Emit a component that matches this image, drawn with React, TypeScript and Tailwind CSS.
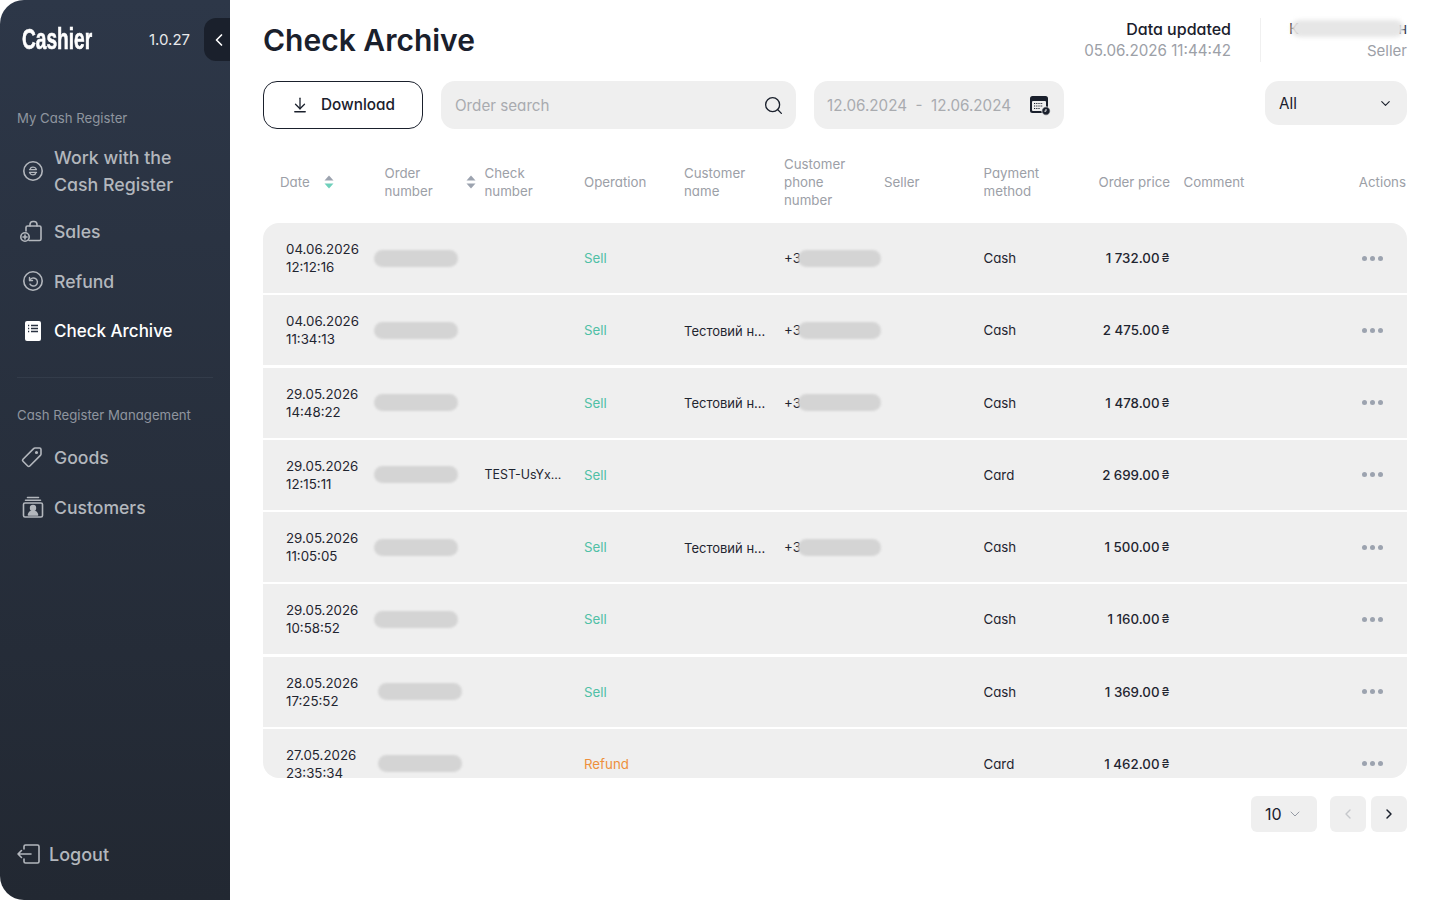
import React from "react";
import { ArrowDownToLine, ChevronDown, ChevronLeft, ChevronRight, Search } from "lucide-react";

const cols =
  "grid grid-cols-[121.5px_100px_99.5px_100px_100px_100px_99.5px_115px_71px_150px_87.5px] items-center";

type Row = {
  date: string;
  time: string;
  check?: string;
  op: string;
  customer?: string;
  phone?: boolean;
  pay: string;
  price: string;
  shifted?: boolean;
};

const rows: Row[] = [
  { date: "04.06.2026", time: "12:12:16", op: "Sell", phone: true, pay: "Cash", price: "1 732.00" },
  { date: "04.06.2026", time: "11:34:13", op: "Sell", customer: "Тестовий н...", phone: true, pay: "Cash", price: "2 475.00" },
  { date: "29.05.2026", time: "14:48:22", op: "Sell", customer: "Тестовий н...", phone: true, pay: "Cash", price: "1 478.00" },
  { date: "29.05.2026", time: "12:15:11", check: "TEST-UsYx...", op: "Sell", pay: "Card", price: "2 699.00" },
  { date: "29.05.2026", time: "11:05:05", op: "Sell", customer: "Тестовий н...", phone: true, pay: "Cash", price: "1 500.00" },
  { date: "29.05.2026", time: "10:58:52", op: "Sell", pay: "Cash", price: "1 160.00" },
  { date: "28.05.2026", time: "17:25:52", op: "Sell", pay: "Cash", price: "1 369.00", shifted: true },
  { date: "27.05.2026", time: "23:35:34", op: "Refund", pay: "Card", price: "1 462.00", shifted: true },
];

function SortIcon({ active }: { active?: boolean }) {
  return (
    <svg width="10" height="14" viewBox="0 0 10 14" className="shrink-0">
      <path d="M5 0.5 9.5 5.5H0.5z" fill="#9ca3af" />
      <path d="M5 13.5 0.5 8.5H9.5z" fill={active ? "#6fd0bb" : "#9ca3af"} />
    </svg>
  );
}

function NavItem({
  icon,
  active,
  className,
  children,
}: {
  icon: React.ReactNode;
  active?: boolean;
  className?: string;
  children: React.ReactNode;
}) {
  return (
    <div
      className={`flex h-[50px] items-center pl-[20px] font-medium leading-[27px] ${
        active ? "text-[17px] text-white" : "text-[17.6px] text-[#b3b7bd]"
      } ${className ?? ""}`}
    >
      <span className="flex w-[34px] shrink-0 items-center">{icon}</span>
      <span className={active ? "pt-px" : ""}>{children}</span>
    </div>
  );
}

const iconProps = {
  width: 26,
  height: 26,
  viewBox: "0 0 26 26",
  fill: "none",
  stroke: "currentColor",
  strokeWidth: 1.6,
  strokeLinecap: "round" as const,
  strokeLinejoin: "round" as const,
};

function Sidebar() {
  return (
    <aside className="flex h-[900px] w-[230px] shrink-0 flex-col rounded-l-[24px] bg-gradient-to-b from-[#2d3748] to-[#222832]">
      <div className="flex h-[79px] items-start">
        <div className="mt-[18px] flex h-[43px] w-full items-center">
          <span className="ml-[22px] w-[127px] origin-left scale-x-[0.66] font-['Liberation_Sans'] text-[29px] font-bold leading-none text-white [-webkit-text-stroke:0.6px_white]">
            Cashier
          </span>
          <span className="w-[55px] pt-[2px] text-[15px] text-[#e8e9eb]">1.0.27</span>
          <span className="flex h-[43px] w-[26px] items-center justify-center rounded-l-[12px] bg-[#1a202c] pl-[3px] text-white">
            <ChevronLeft size={20} strokeWidth={2} />
          </span>
        </div>
      </div>
      <div className="mt-[30px] pl-[17px] text-[13.2px] leading-[18px] text-[#8f959f]">My Cash Register</div>
      <div className="mt-[14px] flex h-[60px] items-center pl-[20px] text-[17.8px] font-medium leading-[27px] text-[#b3b7bd]">
        <span className="flex w-[34px] shrink-0 items-center">
          <svg {...iconProps}>
            <circle cx="13" cy="13" r="9.2" />
            <path d="M9.5 11.6h7M9.5 14.4h7M16 10.6c-.6-1-1.6-1.5-3-1.5-1.6 0-2.7.9-2.7 2.1M10 15.4c.6 1 1.6 1.5 3 1.5 1.6 0 2.7-.9 2.7-2.1" strokeWidth="1.3" />
          </svg>
        </span>
        <span>
          Work with the
          <br />
          Cash Register
        </span>
      </div>
      <NavItem
        className="mt-[5px]"
        icon={
          <svg {...iconProps} className="ml-[-2px]">
            <path d="M8 13V9.5a1.5 1.5 0 0 1 1.5-1.5h12a1.5 1.5 0 0 1 1.5 1.5V21a1.5 1.5 0 0 1-1.5 1.5H11" />
            <path d="M12 8V6.5a3 3 0 0 1 3-3h1a3 3 0 0 1 3 3V8" />
            <circle cx="7" cy="19" r="4.2" fill="#2a3342" />
            <path d="M7 17v4M5 19h4" />
          </svg>
        }
      >
        Sales
      </NavItem>
      <NavItem
        icon={
          <svg {...iconProps}>
            <circle cx="13" cy="13" r="9.2" />
            <path d="M9.5 9.5v3h3" strokeWidth="1.4" />
            <path d="M9.7 12.5a4 4 0 1 1 .3 3.6" strokeWidth="1.4" />
          </svg>
        }
      >
        Refund
      </NavItem>
      <NavItem
        active
        icon={
          <svg width="26" height="26" viewBox="0 0 26 26">
            <rect x="5" y="3" width="16" height="20" rx="2" fill="#fff" />
            <path d="M8 7.5h1.2M8 10.5h1.2M8 13.5h1.2M11 7.5h7M11 10.5h7M11 13.5h7" stroke="#2a3342" strokeWidth="1.4" />
          </svg>
        }
      >
        Check Archive
      </NavItem>
      <div className="mx-[17px] mt-[21px] h-px w-[196px] bg-[#333c4a]" />
      <div className="mt-[28px] pl-[17px] text-[13.2px] leading-[18px] text-[#8f959f]">Cash Register Management</div>
      <NavItem
        className="mt-[8px]"
        icon={
          <svg {...iconProps} className="ml-[-1px]">
            <path d="M4 15.2 14.6 4.6a2 2 0 0 1 1.4-.6h4.5A1.5 1.5 0 0 1 22 5.5V10a2 2 0 0 1-.6 1.4L10.8 22a1.5 1.5 0 0 1-2.1 0L4 17.3a1.5 1.5 0 0 1 0-2.1z" />
            <circle cx="17.5" cy="8.5" r="0.8" fill="currentColor" />
          </svg>
        }
      >
        Goods
      </NavItem>
      <NavItem
        icon={
          <svg {...iconProps}>
            <rect x="3.5" y="9" width="19" height="14" rx="1.5" />
            <path d="M5.5 6.3h15M7.5 3.5h11" />
            <circle cx="13" cy="14" r="2.4" fill="currentColor" />
            <path d="M8.5 21c.4-2.4 2-3.6 4.5-3.6s4.1 1.2 4.5 3.6z" fill="currentColor" />
          </svg>
        }
      >
        Customers
      </NavItem>
      <div className="mt-auto mb-[21px] flex h-[50px] items-center pl-[16px] text-[18px] font-medium text-[#b3b7bd]">
        <span className="flex w-[33px] shrink-0 items-center">
          <svg {...iconProps}>
            <path d="M8 8V5.5A1.5 1.5 0 0 1 9.5 4h12A1.5 1.5 0 0 1 23 5.5v15a1.5 1.5 0 0 1-1.5 1.5h-12A1.5 1.5 0 0 1 8 20.5V18" />
            <path d="M15 13H2M5.5 9.5 2 13l3.5 3.5" />
          </svg>
        </span>
        Logout
      </div>
    </aside>
  );
}

function Header() {
  return (
    <div className="flex h-[81px] items-start justify-between">
      <h1 className="mt-[20px] text-[30px] font-semibold leading-[40px] text-[#1a202c]">Check Archive</h1>
      <div className="mt-[18px] flex items-stretch">
        <div className="flex flex-col items-end pr-[29px] leading-[22px]">
          <span className="text-[16px] font-medium text-[#1a202c]">Data updated</span>
          <span className="text-[15.2px] text-[#9ca0a7]">05.06.2026 11:44:42</span>
        </div>
        <div className="h-[44px] w-px bg-[#f0f0f0]" />
        <div className="flex w-[146px] flex-col items-end text-[15px] leading-[22px]">
          <span className="relative flex w-[118px] justify-between text-[#1a202c]">
            <span>К</span>
            <span>н</span>
            <span className="absolute left-[2px] top-[2px] h-[17px] w-[113px] rounded-full bg-[#e6e6e6] blur-[2px]" />
          </span>
          <span className="text-[#9ca0a7]">Seller</span>
        </div>
      </div>
    </div>
  );
}

function Toolbar() {
  return (
    <div className="flex h-[48px] items-start text-[15.2px]">
      <button className="flex h-[48px] w-[160px] items-center justify-center gap-[12px] rounded-[14px] border border-[#1a202c] text-[15.3px] font-medium text-[#1a202c]">
        <ArrowDownToLine size={18} strokeWidth={1.7} />
        <span className="pt-px">Download</span>
      </button>
      <div className="ml-[18px] flex h-[48px] w-[355px] items-center justify-between rounded-[14px] bg-[#efefef] pl-[14px] pr-[12px] text-[#a9abaf]">
        <span className="pt-[2px]">Order search</span>
        <Search size={21} strokeWidth={1.5} className="text-[#1a202c]" />
      </div>
      <div className="ml-[18px] flex h-[48px] w-[250px] items-center justify-between rounded-[14px] bg-[#efefef] pl-[13px] pr-[13px] text-[#a9abaf]">
        <span className="pt-[2px]">12.06.2024&nbsp; - &nbsp;12.06.2024</span>
        <svg width="22" height="22" viewBox="0 0 22 22">
          <rect x="1" y="2" width="18" height="17" rx="2.5" fill="#1a202c" />
          <rect x="3" y="7" width="14" height="10" rx="1" fill="#efefef" />
          <path d="M5 9.5h9M5 12h9M5 14.5h6" stroke="#1a202c" strokeWidth="1.2" strokeDasharray="1.2 1" />
          <circle cx="17" cy="17" r="4.2" fill="#1a202c" stroke="#efefef" strokeWidth="0.8" />
          <path d="M17 15v2.2h-1.6" stroke="#fff" strokeWidth="0.9" fill="none" />
        </svg>
      </div>
      <div className="ml-auto flex h-[44px] w-[142px] items-center justify-between rounded-[14px] bg-[#efefef] pl-[14px] pr-[14px] text-[#1a202c]">
        <span className="pt-[3px]">All</span>
        <ChevronDown size={15} strokeWidth={1.8} />
      </div>
    </div>
  );
}

function TableHead() {
  return (
    <div className={`${cols} mt-[12px] h-[82px] text-[13.3px] leading-[18px] text-[#9ca0a7]`}>
      <div className="flex items-center gap-[14px] pl-[17px]">
        Date <SortIcon active />
      </div>
      <div className="flex items-center justify-between pr-[9px]">
        <span>
          Order
          <br />
          number
        </span>
        <SortIcon />
      </div>
      <div>
        Check
        <br />
        number
      </div>
      <div>Operation</div>
      <div>
        Customer
        <br />
        name
      </div>
      <div>
        Customer
        <br />
        phone
        <br />
        number
      </div>
      <div>Seller</div>
      <div>
        Payment
        <br />
        method
      </div>
      <div className="whitespace-nowrap text-right">Order price</div>
      <div className="pl-[14px]">Comment</div>
      <div className="pr-[1px] text-right">Actions</div>
    </div>
  );
}

function TableRow({ row }: { row: Row }) {
  return (
    <div className={`${cols} h-[70px] shrink-0 bg-[#efefef] text-[13.3px] leading-[18px] text-[#1f2530]`}>
      <div className="pl-[23px]">
        {row.date}
        <br />
        {row.time}
      </div>
      <div>
        <div className={`h-[17px] w-[84px] rounded-full bg-[#d4d4d4] blur-[1px] ${row.shifted ? "ml-[-6.5px]" : "ml-[-10.5px]"}`} />
      </div>
      <div className="whitespace-nowrap pt-px text-[12.4px]">{row.check}</div>
      <div className={row.op === "Sell" ? "text-[#4fc0a6]" : "text-[#ee8f3c]"}>{row.op}</div>
      <div className="whitespace-nowrap pt-px text-[13px]">{row.customer}</div>
      <div className="flex items-center whitespace-nowrap">
        {row.phone && (
          <>
            <span>+3</span>
            <span className="ml-[-3px] h-[17px] w-[83px] rounded-full bg-[#d4d4d4] blur-[1px]" />
          </>
        )}
      </div>
      <div />
      <div>{row.pay}</div>
      <div className="flex items-center justify-end whitespace-nowrap font-medium">
        {row.price}
        <span className="ml-[2px] text-[12px]">₴</span>
      </div>
      <div />
      <div className="flex justify-end gap-[3px] pr-[24px]">
        <span className="size-[5px] rounded-full bg-[#9ca3af]" />
        <span className="size-[5px] rounded-full bg-[#9ca3af]" />
        <span className="size-[5px] rounded-full bg-[#9ca3af]" />
      </div>
    </div>
  );
}

function Pagination() {
  return (
    <div className="mt-[18px] flex justify-end">
      <div className="flex h-[36px] w-[66px] items-center gap-[5px] rounded-[6px] bg-[#efefef] pl-[14px] text-[16px] text-[#1a202c]">
        10
        <ChevronDown size={16} strokeWidth={1.4} className="text-[#8f959f]" />
      </div>
      <div className="ml-[13px] flex size-[36px] items-center justify-center rounded-[6px] bg-[#efefef] text-[#c5c7cb]">
        <ChevronLeft size={16} strokeWidth={2} />
      </div>
      <div className="ml-[5px] flex size-[36px] items-center justify-center rounded-[6px] bg-[#efefef] text-[#1a202c]">
        <ChevronRight size={16} strokeWidth={2.2} />
      </div>
    </div>
  );
}

export default function App() {
  return (
    <div className="flex h-[900px] w-[1440px] overflow-hidden bg-white font-['Inter'] [font-feature-settings:'cv11']">
      <Sidebar />
      <main className="flex min-w-0 flex-1 flex-col pl-[33px] pr-[33px]">
        <Header />
        <Toolbar />
        <TableHead />
        <div className="flex h-[555px] flex-col gap-[2.25px] overflow-hidden rounded-[16px]">
          {rows.map((row) => (
            <TableRow key={row.date + row.time} row={row} />
          ))}
        </div>
        <Pagination />
      </main>
    </div>
  );
}
